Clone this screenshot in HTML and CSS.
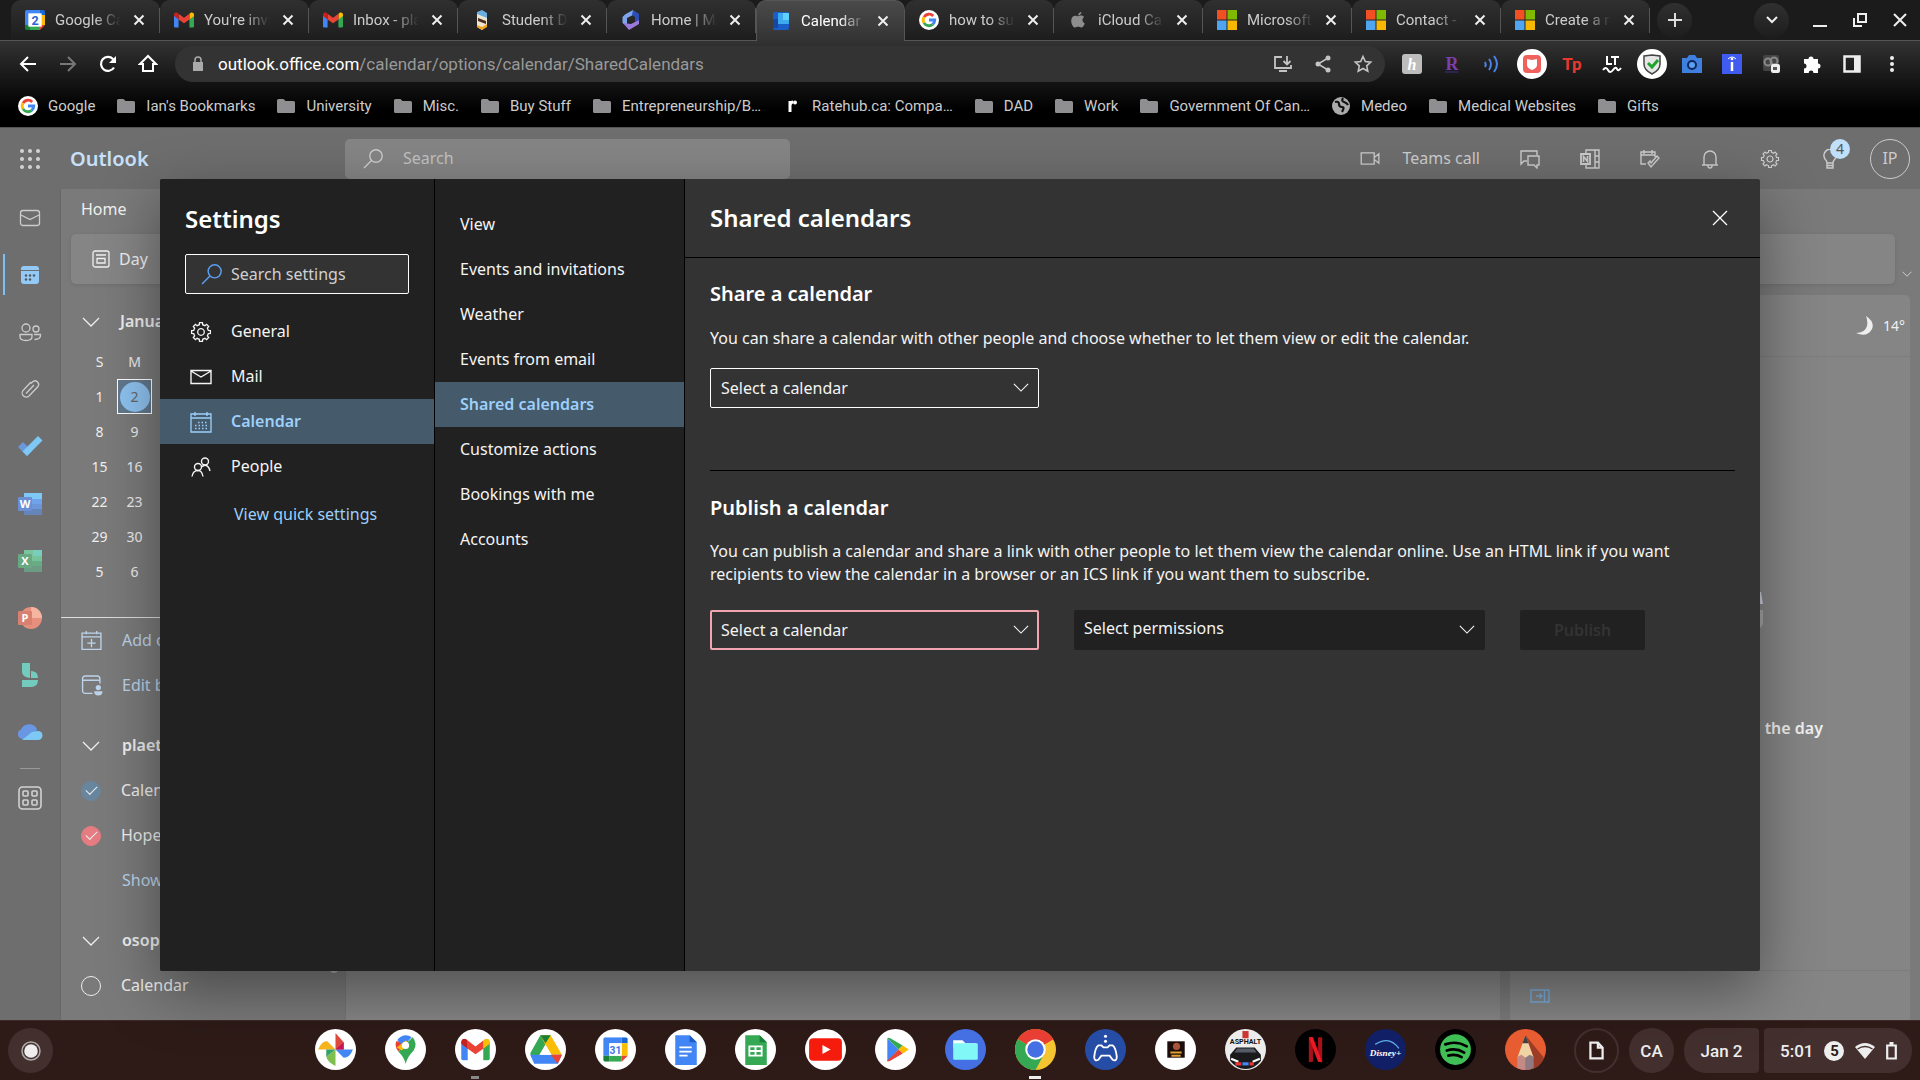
FILE: index.html
```html
<!doctype html>
<html lang="en">

<head>
	<meta charset="utf-8">
	<title>Calendar - Outlook</title>
	<link rel="stylesheet" href="styles.css">
</head>

<body>
	<!-- shared icons -->
	<svg class="defs" width="0" height="0">
		<symbol id="x" viewBox="0 0 12 12"><path d="M1.5 1.5l9 9M10.5 1.5l-9 9" fill="none" stroke="currentColor" stroke-width="2"/></symbol>
		<symbol id="folder" viewBox="0 0 20 20"><path d="M1 4.500a1.500 1.500 0 0 1 1.500-1.500h5l2 2h8a1.500 1.500 0 0 1 1.500 1.500v9a1.500 1.500 0 0 1-1.500 1.500h-15A1.500 1.500 0 0 1 1 15.500z" fill="#8f8f92"/></symbol>
		<symbol id="gmail" viewBox="0 0 24 18"><path d="M0 2v14.500A1.500 1.500 0 0 0 1.500 18H5.500V8z" fill="#4285f4"/><path d="M24 2v14.500a1.500 1.500 0 0 1-1.500 1.500H18.500V8z" fill="#34a853"/><path d="M18.500 1.500V8.300L24 4.200V2.500C24 .3 21.400-.8 19.700.5z" fill="#fbbc04"/><path d="M5.500 8.300V1.500L12 6.400l6.500-4.900v6.800L12 13z" fill="#ea4335"/><path d="M0 2.500v1.700l5.500 4.100V1.500L4.300.5C2.600-.8 0 .3 0 2.500z" fill="#c5221f"/></symbol>
		<symbol id="ms" viewBox="0 0 20 20"><path d="M0 0h9.500v9.500H0z" fill="#f25022"/><path d="M10.500 0H20v9.500h-9.500z" fill="#7fba00"/><path d="M0 10.500h9.500V20H0z" fill="#4fa5ef"/><path d="M10.500 10.500H20V20h-9.500z" fill="#f8b700"/></symbol>
		<symbol id="g" viewBox="0 0 20 20"><circle cx="10" cy="10" r="10" fill="#fff"/><g fill="none" stroke-width="2.800"><path d="M14.200 6A5.800 5.800 0 0 0 5 7.100" stroke="#ea4335"/><path d="M5 7.100a5.800 5.800 0 0 0 0 5.800" stroke="#fbbc05"/><path d="M5 12.900a5.800 5.800 0 0 0 8.700 1.500" stroke="#34a853"/><path d="M13.700 14.400A5.800 5.800 0 0 0 15.800 10H10" stroke="#4285f4"/></g></symbol>
		<symbol id="down" viewBox="0 0 18 10"><path d="M1 1l8 8 8-8" fill="none" stroke="currentColor" stroke-width="1.300"/></symbol>
		<symbol id="gear" viewBox="-11 -11 22 22"><path d="M-1.690-7.310L-1.490-9.380H1.490L1.690-7.310 3.970-6.360 5.580-7.690 7.690-5.580 6.360-3.970 7.310-1.690 9.380-1.490V1.490L7.310 1.690 6.360 3.970 7.690 5.580 5.580 7.690 3.970 6.360 1.690 7.310 1.490 9.380H-1.490L-1.690 7.310-3.970 6.360-5.580 7.690-7.690 5.580-6.360 3.970-7.310 1.690-9.380 1.490V-1.490L-7.310-1.690-6.360-3.970-7.690-5.580-5.580-7.690-3.970-6.360z" fill="none" stroke="currentColor" stroke-width="1.300"/><circle r="3.300" fill="none" stroke="currentColor" stroke-width="1.300"/></symbol>
		<symbol id="find" viewBox="0 0 20 20"><path d="M1 19l7.500-7.500" fill="none" stroke="currentColor" stroke-width="1.400"/><circle cx="13" cy="7" r="6.200" fill="none" stroke="currentColor" stroke-width="1.400"/></symbol>
		<symbol id="gcal" viewBox="0 0 24 24"><path d="M2 0h16v6H6v12H0V2a2 2 0 0 1 2-2z" fill="#4285f4"/><path d="M18 0h4a2 2 0 0 1 2 2v4h-6z" fill="#1967d2"/><path d="M18 6h6v12h-6z" fill="#fbbc04"/><path d="M6 18h12v6H6z" fill="#34a853"/><path d="M0 18h6v6H2a2 2 0 0 1-2-2z" fill="#188038"/><path d="M18 18h6l-6 6z" fill="#ea4335"/><path d="M6 6h12v12H6z" fill="#fff"/></symbol>
	</svg>

	<header class="browser">
		<div class="tabs">
			<div class="tab"><svg class="fav" viewBox="0 0 24 24"><use href="#gcal"/><path d="M4 4h16v16H4z" fill="#fff"/><text x="12" y="18" text-anchor="middle" class="fav-num">2</text></svg><span class="tab-title">Google Cale</span><button class="tab-x" aria-label="Close tab"><svg><use href="#x"/></svg></button></div>
			<div class="tab"><svg class="fav"><use href="#gmail"/></svg><span class="tab-title">You're invit</span><button class="tab-x" aria-label="Close tab"><svg><use href="#x"/></svg></button></div>
			<div class="tab"><svg class="fav"><use href="#gmail"/></svg><span class="tab-title">Inbox - plae</span><button class="tab-x" aria-label="Close tab"><svg><use href="#x"/></svg></button></div>
			<div class="tab"><svg class="fav" viewBox="0 0 20 20"><path d="M5 2l5-2 5 3v5l-5 3-5-3z" fill="#69aee0"/><path d="M5 4l10 4v8l-5 4-5-3z" fill="#efe6d2"/><path d="M6 8l8 3v3l-8-3z" fill="#4a2c20"/><path d="M5 15l5 2 5-3v3l-5 3-5-3z" fill="#f0a51e"/></svg><span class="tab-title">Student Dev</span><button class="tab-x" aria-label="Close tab"><svg><use href="#x"/></svg></button></div>
			<div class="tab"><svg class="fav" viewBox="0 0 20 20"><path d="M12 0L4 4.500 1.500 7v6L6 16V8l6-3z" fill="#7fa5ee"/><path d="M12 0l6 4v6l-4 2V7l-3-2z" fill="#2c4fb5"/><path d="M2 13l6 7 10-6v-4l-8 4z" fill="#9a79dc"/></svg><span class="tab-title">Home | Micr</span><button class="tab-x" aria-label="Close tab"><svg><use href="#x"/></svg></button></div>
			<div class="tab active"><svg class="fav" viewBox="0 0 20 20"><rect x="2" y="1" width="16" height="18" rx="2" fill="#1a5fc8"/><path d="M7 2h11v11H7z" fill="#3fa9f0"/><path d="M12 2h6v7h-6z" fill="#5fd0ff"/><path d="M2 8h5v9H2z" fill="#1748a0"/></svg><span class="tab-title">Calendar - O</span><button class="tab-x" aria-label="Close tab"><svg><use href="#x"/></svg></button></div>
			<div class="tab"><svg class="fav"><use href="#g"/></svg><span class="tab-title">how to subs</span><button class="tab-x" aria-label="Close tab"><svg><use href="#x"/></svg></button></div>
			<div class="tab"><svg class="fav" viewBox="0 0 20 20"><path d="M13.500 2c0 1.800-1.500 3.400-3.300 3.400C10 3.500 11.700 2 13.500 2zM10 6.200c1 0 1.800-.7 3.200-.7 1.200 0 2.300.6 3 1.600-2.600 1.600-2.200 5.200.6 6.300-.8 2-2 4.100-3.600 4.100-1.200 0-1.600-.7-3-.7s-1.900.7-3 .7c-2.200 0-4-3.900-4-6.800 0-3.200 2-5 4-5 1.200 0 2 .5 2.800.5z" fill="#8d8d8d"/></svg><span class="tab-title">iCloud Cale</span><button class="tab-x" aria-label="Close tab"><svg><use href="#x"/></svg></button></div>
			<div class="tab"><svg class="fav"><use href="#ms"/></svg><span class="tab-title">Microsoft A</span><button class="tab-x" aria-label="Close tab"><svg><use href="#x"/></svg></button></div>
			<div class="tab"><svg class="fav"><use href="#ms"/></svg><span class="tab-title">Contact - M</span><button class="tab-x" aria-label="Close tab"><svg><use href="#x"/></svg></button></div>
			<div class="tab"><svg class="fav"><use href="#ms"/></svg><span class="tab-title">Create a ne</span><button class="tab-x" aria-label="Close tab"><svg><use href="#x"/></svg></button></div>
			<button class="round-btn" aria-label="New tab"><svg width="16" height="16" viewBox="0 0 16 16"><path d="M8 1v14M1 8h14" stroke="#ddd" stroke-width="2"/></svg></button>
			<div class="win">
				<button class="round-btn" aria-label="Search tabs"><svg width="12" height="8" viewBox="0 0 12 8"><path d="M1 1l5 5 5-5" fill="none" stroke="#eee" stroke-width="2"/></svg></button>
				<button class="win-btn" aria-label="Minimize"><svg viewBox="0 0 16 16"><path d="M1 14h14" stroke="#eee" stroke-width="2"/></svg></button>
				<button class="win-btn" aria-label="Restore"><svg viewBox="0 0 16 16"><path d="M6 2h8v8H6zM2 6v8h8" fill="none" stroke="#eee" stroke-width="2"/></svg></button>
				<button class="win-btn" aria-label="Close"><svg viewBox="0 0 16 16"><path d="M2 2l12 12M14 2L2 14" stroke="#eee" stroke-width="2"/></svg></button>
			</div>
		</div>

		<div class="toolbar">
			<button class="tool" aria-label="Back"><svg viewBox="0 0 20 20"><path d="M18 10H3M10 3l-7 7 7 7" fill="none" stroke="#fff" stroke-width="2"/></svg></button>
			<button class="tool" aria-label="Forward"><svg viewBox="0 0 20 20"><path d="M2 10h15M10 3l7 7-7 7" fill="none" stroke="#777" stroke-width="2"/></svg></button>
			<button class="tool" aria-label="Reload"><svg viewBox="0 0 20 20"><path d="M16 13.500A7 7 0 1 1 15 5l2 2.500" fill="none" stroke="#fff" stroke-width="2.200"/><path d="M18 2v7h-7z" fill="#fff"/></svg></button>
			<button class="tool" aria-label="Home"><svg viewBox="0 0 20 20"><path d="M2 10l8-8 8 8h-3v7H5v-7z" fill="none" stroke="#fff" stroke-width="2"/></svg></button>
			<div class="omnibox">
				<svg class="lock" viewBox="0 0 12 16"><path d="M1 6h10v9H1z" fill="#aaa"/><path d="M3 7V4a3 3 0 0 1 6 0v3" fill="none" stroke="#aaa" stroke-width="1.500"/></svg>
				<span class="url"><b>outlook.office.com</b>/calendar/options/calendar/SharedCalendars</span>
				<button class="tool" aria-label="Install"><svg viewBox="0 0 20 20"><path d="M9 3H2v11h16v-3M6 17h8M14 2v8M10.500 7l3.500 3.500L17.500 7" fill="none" stroke="#c4c4c4" stroke-width="1.800"/></svg></button>
				<button class="tool" aria-label="Share"><svg viewBox="0 0 20 20"><path d="M15 4L5 10l10 6" fill="none" stroke="#c4c4c4" stroke-width="1.500"/><g fill="#c4c4c4"><circle cx="15" cy="4" r="2.500"/><circle cx="5" cy="10" r="2.500"/><circle cx="15" cy="16" r="2.500"/></g></svg></button>
				<button class="tool" aria-label="Bookmark"><svg viewBox="0 0 20 20"><path d="M10 2.500l2.300 5 5.400.6-4 3.700 1.100 5.400-4.800-2.700-4.800 2.700 1.100-5.400-4-3.700 5.400-.6z" fill="none" stroke="#c4c4c4" stroke-width="1.600"/></svg></button>
			</div>
			<div class="exts">
				<button class="tool" aria-label="Honey"><svg viewBox="0 0 20 20"><rect width="20" height="20" rx="3" fill="#bdbdbd"/><text x="10" y="16" text-anchor="middle" class="ext-h">h</text></svg></button>
				<button class="tool" aria-label="Rakuten"><svg viewBox="0 0 20 20"><text x="10" y="16" text-anchor="middle" class="ext-r">R</text><path d="M3 18h13" stroke="#2c2550" stroke-width="2"/></svg></button>
				<button class="tool" aria-label="Read aloud"><svg viewBox="0 0 20 20"><g fill="none" stroke="#4b83e8" stroke-width="2"><path d="M3 8q1.500 2.500 0 5M7 5q4 5 0 11M12 2q6 8 0 16"/></g></svg></button>
				<button class="tool" aria-label="Ad blocker"><svg class="big" viewBox="0 0 30 30"><circle cx="15" cy="15" r="15" fill="#fff"/><rect x="6" y="6" width="18" height="18" rx="4" fill="#f0605c"/><path d="M10 10l5 1 5-1v6q0 3-5 5-5-2-5-5z" fill="#fff"/></svg></button>
				<button class="tool" aria-label="Teleparty"><svg viewBox="0 0 20 20"><text x="10" y="16" text-anchor="middle" class="ext-tp">Tp</text></svg></button>
				<button class="tool" aria-label="LanguageTool"><svg viewBox="0 0 20 20"><path d="M5 2v8h5M9 3h8M13 3v8" fill="none" stroke="#fff" stroke-width="2"/><path d="M1 16q3-4 5 0t5 0 4-1 4-1" fill="none" stroke="#fff" stroke-width="2"/></svg></button>
				<button class="tool" aria-label="Security"><svg class="big" viewBox="0 0 30 30"><circle cx="15" cy="15" r="15" fill="#fff"/><path d="M7 7l8-1 8 1v8q0 6-8 10-8-4-8-10z" fill="#e6e6e6" stroke="#444" stroke-width="1.500"/><path d="M11 14l4 4 6-7" fill="none" stroke="#1fa32b" stroke-width="3"/></svg></button>
				<button class="tool" aria-label="Screenshot"><svg viewBox="0 0 20 20"><path d="M0 4h5l2-3h6l2 3h5v15H0z" fill="#3f7fe0"/><circle cx="10" cy="11" r="4" fill="#5aa0f5" stroke="#10275c" stroke-width="2"/></svg></button>
				<button class="tool" aria-label="Info"><svg viewBox="0 0 20 20"><path d="M0 0h20v20H0z" fill="#3f5bf0"/><path d="M10 8v9" stroke="#fff" stroke-width="2.500"/><circle cx="10" cy="5" r="1.300" fill="#fff"/><path d="M6 5q4-4 8 0" fill="none" stroke="#fff"/></svg></button>
				<button class="tool" aria-label="Incognito"><svg viewBox="0 0 20 20"><rect x="1" y="1" width="16" height="16" rx="2" fill="#444"/><circle cx="6" cy="8" r="3.500" fill="none" stroke="#888" stroke-width="2"/><circle cx="12" cy="7" r="3.500" fill="none" stroke="#888" stroke-width="2"/><rect x="9" y="10" width="9" height="9" rx="2" fill="#eee"/><path d="M11 13h4v3h-4z" fill="#555"/></svg></button>
				<button class="tool" aria-label="Extensions"><svg viewBox="0 0 20 20"><path d="M2 5h4.500a2.500 2.500 0 1 1 5 0H16v4.500a2.500 2.500 0 1 1 0 5V19h-4.500a2.400 2.400 0 1 0-4.800 0H2v-4.500a2.500 2.500 0 0 0 0-5z" fill="#fff"/></svg></button>
				<button class="tool" aria-label="Side panel"><svg viewBox="0 0 20 20"><path d="M2.500 2.500h15v15h-15z" fill="none" stroke="#eee" stroke-width="2.500"/><path d="M12 2h6v16h-6z" fill="#eee"/></svg></button>
				<button class="tool" aria-label="Menu"><svg viewBox="0 0 20 20"><g fill="#eee"><circle cx="10" cy="4" r="2"/><circle cx="10" cy="10" r="2"/><circle cx="10" cy="16" r="2"/></g></svg></button>
			</div>
		</div>

		<nav class="bookmarks">
			<a href="#"><svg><use href="#g"/></svg>Google</a>
			<a href="#"><svg><use href="#folder"/></svg>Ian's Bookmarks</a>
			<a href="#"><svg><use href="#folder"/></svg>University</a>
			<a href="#"><svg><use href="#folder"/></svg>Misc.</a>
			<a href="#"><svg><use href="#folder"/></svg>Buy Stuff</a>
			<a href="#"><svg><use href="#folder"/></svg>Entrepreneurship/B…</a>
			<a href="#"><svg viewBox="0 0 20 20"><path d="M8 16V5M8 9q1-3 3-3" fill="none" stroke="#fff" stroke-width="3"/><circle cx="13" cy="6.500" r="2" fill="#fff"/></svg>Ratehub.ca: Compa…</a>
			<a href="#"><svg><use href="#folder"/></svg>DAD</a>
			<a href="#"><svg><use href="#folder"/></svg>Work</a>
			<a href="#"><svg><use href="#folder"/></svg>Government Of Can…</a>
			<a href="#"><svg viewBox="0 0 20 20"><circle cx="10" cy="10" r="9" fill="#aaa"/><path d="M4 6q4-1 4 2t3 3 0 5M12 2q-2 3 1 4t4 3" fill="none" stroke="#111" stroke-width="2.200"/></svg>Medeo</a>
			<a href="#"><svg><use href="#folder"/></svg>Medical Websites</a>
			<a href="#"><svg><use href="#folder"/></svg>Gifts</a>
		</nav>
	</header>

	<main class="app">
		<header class="app-bar">
			<button class="waffle" aria-label="App launcher"><svg viewBox="0 0 20 20"><g fill="#d2d2d2"><circle cx="2" cy="2" r="2"/><circle cx="10" cy="2" r="2"/><circle cx="18" cy="2" r="2"/><circle cx="2" cy="10" r="2"/><circle cx="10" cy="10" r="2"/><circle cx="18" cy="10" r="2"/><circle cx="2" cy="18" r="2"/><circle cx="10" cy="18" r="2"/><circle cx="18" cy="18" r="2"/></g></svg></button>
			<a class="brand" href="#">Outlook</a>
			<label class="search"><svg><use href="#find"/></svg><input type="text" placeholder="Search" aria-label="Search"></label>
			<div class="app-tools">
				<button class="teams"><svg viewBox="0 0 22 14"><path d="M1 1h14v12H1zM15 6l5-4v10l-5-4" fill="none" stroke="currentColor" stroke-width="1.400"/></svg>Teams call</button>
				<button class="app-btn" aria-label="Chat"><svg viewBox="0 0 20 20"><path d="M7 12H4l-3 3V2h16v4M8 7h11v9h-2v3l-3-3H8z" fill="none" stroke="currentColor" stroke-width="1.400"/></svg></button>
				<button class="app-btn" aria-label="OneNote"><svg viewBox="0 0 20 20"><path d="M6 5V1h13v18H6v-4M15 1v18M15 7h4M15 13h4" fill="none" stroke="currentColor" stroke-width="1.400"/><path d="M1 5h9v10H1z" fill="none" stroke="currentColor" stroke-width="1.800"/><path d="M3.500 13V7.500l4 5V7" fill="none" stroke="currentColor" stroke-width="1.600"/></svg></button>
				<button class="app-btn" aria-label="To do"><svg viewBox="0 0 20 20"><path d="M6 15H1V3h14v5M1 6h14M4 1v4M12 1v4M8 14l3 4 8-9-2-2-6 7-1-2z" fill="none" stroke="currentColor" stroke-width="1.400"/></svg></button>
				<button class="app-btn" aria-label="Notifications"><svg viewBox="0 0 20 20"><path d="M2 16h16M4 16V8a6 6 0 0 1 12 0v8M8 16v1a2 2 0 0 0 4 0v-1" fill="none" stroke="currentColor" stroke-width="1.400"/></svg></button>
				<button class="app-btn" aria-label="Settings"><svg><use href="#gear"/></svg></button>
				<button class="app-btn" aria-label="Tips"><svg viewBox="0 0 20 20"><path d="M7 14q0-2-2-4a6.500 6.500 0 0 1 5-10 6.500 6.500 0 0 1 5 10q-2 2-2 4zM7 14v5h6v-5M7 16.500h6" fill="none" stroke="currentColor" stroke-width="1.400"/></svg><span class="badge">4</span></button>
				<button class="avatar">IP</button>
			</div>
		</header>

		<div class="app-body">
			<div class="rail">
				<nav class="rail-list">
					<a href="#" aria-label="Mail"><svg viewBox="0 0 24 24"><rect x="2.500" y="4.500" width="19" height="15" rx="2.500" fill="none" stroke="currentColor" stroke-width="1.300"/><path d="M3 9l9 4.500L21 9" fill="none" stroke="currentColor" stroke-width="1.300"/></svg></a>
					<a href="#" class="on" aria-label="Calendar"><svg viewBox="0 0 24 24"><path d="M3 7V6a3 3 0 0 1 3-3h12a3 3 0 0 1 3 3v1zM3 8h18v10a3 3 0 0 1-3 3H6a3 3 0 0 1-3-3z" fill="#92c9f7"/><g fill="#555"><circle cx="8" cy="12.500" r="1.200"/><circle cx="12" cy="12.500" r="1.200"/><circle cx="16" cy="12.500" r="1.200"/><circle cx="8" cy="16.500" r="1.200"/><circle cx="12" cy="16.500" r="1.200"/></g></svg></a>
					<a href="#" aria-label="People"><svg viewBox="0 0 24 24"><g fill="none" stroke="currentColor" stroke-width="1.300"><circle cx="8" cy="8" r="4"/><circle cx="18" cy="9" r="3"/><path d="M2 14.500h12v2q0 4-6 4t-6-4zM16 14.500h6.500q.5 5-6 5"/></g></svg></a>
					<a href="#" aria-label="Files"><svg viewBox="0 0 24 24"><path d="M13 5L5.500 13a3.900 3.900 0 0 0 5.500 6l9-9.500a3.600 3.600 0 0 0-5-5L13 6.500M8 16.500l8-8.500" fill="none" stroke="currentColor" stroke-width="1.300"/></svg></a>
					<a href="#" aria-label="To Do"><svg viewBox="0 0 24 24"><path d="M0 13l5-5 9 9-5 5z" fill="#6c97da"/><path d="M9 22l-4.500-4.500L20 2l4.500 4.500z" fill="#7dc8f5"/></svg></a>
					<a href="#" aria-label="Word"><svg viewBox="0 0 24 24"><path d="M6 1h18v6H6z" fill="#7dc8f5"/><path d="M6 7h18v5H6z" fill="#6ea3ec"/><path d="M6 12h18v5H6z" fill="#6b96d9"/><path d="M6 17h18v6H6z" fill="#6484ba"/><rect y="5" width="14" height="14" rx="1" fill="#6a8fd4"/><text x="7" y="16" text-anchor="middle" class="office">W</text></svg></a>
					<a href="#" aria-label="Excel"><svg viewBox="0 0 24 24"><path d="M6 1h18v6H6z" fill="#78cdbc"/><path d="M6 1h9v11H6z" fill="#7ac49b"/><path d="M6 12h18v5H6z" fill="#69ab82"/><path d="M15 7h9v5h-9z" fill="#75c39b"/><path d="M6 17h18v6H6z" fill="#6c9c84"/><rect y="5" width="14" height="14" rx="1" fill="#68a982"/><text x="7" y="16" text-anchor="middle" class="office">X</text></svg></a>
					<a href="#" aria-label="PowerPoint"><svg viewBox="0 0 24 24"><circle cx="13" cy="12" r="11" fill="#e58f7c"/><path d="M13 1a11 11 0 0 1 11 11H13z" fill="#f6b5a1"/><rect y="5" width="14" height="14" rx="1" fill="#d98170"/><text x="7" y="16" text-anchor="middle" class="office">P</text></svg></a>
					<a href="#" aria-label="Bookings"><svg viewBox="0 0 24 24"><path d="M4 0h8v15q-8-1-8-6zM13 8q7 0 7 7h-7zM4 17h16q0 7-7 7H4z" fill="#73cbbd"/></svg></a>
					<a href="#" aria-label="OneDrive"><svg viewBox="0 0 24 24"><path d="M4 19a5 5 0 0 1-1-9.500A9 9 0 0 1 19 9l-3 10z" fill="#6a97e4"/><path d="M4 20l10-8 6-1a4.500 4.500 0 0 1 0 9z" fill="#7dc8f5"/></svg></a>
				</nav>
				<div class="rail-line"></div>
				<button class="more" aria-label="More apps"><svg viewBox="0 0 24 24"><g fill="none" stroke="currentColor" stroke-width="1.600"><rect x="1" y="1" width="22" height="22" rx="3.500"/><rect x="5" y="5" width="5" height="5" rx="1"/><rect x="14" y="5" width="5" height="5" rx="1"/><rect x="5" y="14" width="5" height="5" rx="1"/><rect x="14" y="14" width="5" height="5" rx="1"/></g></svg></button>
			</div>

			<div class="page">
				<a class="home-tab" href="#">Home</a>
				<div class="ribbon-row">
					<div class="ribbon">
						<button class="day"><svg viewBox="0 0 18 18"><g fill="none" stroke="currentColor" stroke-width="1.300"><rect x="1" y="1" width="16" height="16" rx="2"/><path d="M4 5h10M5 8.500h8v4.500H5z"/></g></svg>Day</button>
					</div>
					<svg class="ribbon-more"><use href="#down"/></svg>
				</div>
				<div class="columns">
					<aside class="side">
						<button class="side-row month"><svg class="chev"><use href="#down"/></svg><b>Janua</b></button>
						<table class="days">
							<tr><th>S</th><th>M</th></tr>
							<tr><td>1</td><td class="today"><span>2</span></td></tr>
							<tr><td>8</td><td>9</td></tr>
							<tr><td>15</td><td>16</td></tr>
							<tr><td>22</td><td>23</td></tr>
							<tr><td>29</td><td>30</td></tr>
							<tr><td>5</td><td>6</td></tr>
						</table>
						<div class="lists">
							<a class="side-row" href="#"><svg class="side-icon" viewBox="0 0 20 20"><path d="M1 3h18v15.500H1zM1 6.500h18M5 1v3M15 1v3M10 8.500v8M6 12.500h8" fill="none" stroke="currentColor" stroke-width="1.300"/></svg>Add c</a>
							<a class="side-row" href="#"><svg class="side-icon" viewBox="0 0 20 20"><path d="M11 17.500H4a2.500 2.500 0 0 1-2.500-2.500V3.500A2.500 2.500 0 0 1 4 1h11.500A2.500 2.500 0 0 1 18 3.500V8M1.500 5H18" fill="none" stroke="currentColor" stroke-width="1.300"/><circle cx="16.500" cy="12" r="2.500" fill="currentColor"/><path d="M12.500 15.500h8q0 4-4 4t-4-4z" fill="currentColor"/></svg>Edit b</a>
							<button class="side-row group"><svg class="chev"><use href="#down"/></svg><b>plaet</b></button>
							<label class="side-row"><input type="checkbox" class="tick blue" checked>Calen</label>
							<label class="side-row"><input type="checkbox" class="tick red" checked>Hope</label>
							<a class="side-row plain" href="#">Show</a>
							<button class="side-row group"><svg class="chev"><use href="#down"/></svg><b>osop</b></button>
							<label class="side-row"><input type="checkbox" class="tick">Calendar</label>
						</div>
					</aside>
					<section class="surface"></section>
					<section class="agenda">
						<div class="weather"><svg viewBox="0 0 20 20"><path d="M11 0q9 6 6 13-5 9-16 4 9 0 11-7 1-5-1-10z" fill="#eee"/></svg>14°</div>
						<div class="agenda-body">
							<svg viewBox="0 0 106 38"><path d="M20 0h84l2 12H0z" fill="#c9cdd6"/><path d="M0 18h106v14l-4 6H4l-4-6z" fill="#a4a4a4"/></svg>
							<p>the day</p>
						</div>
						<div class="agenda-foot"><svg viewBox="0 0 20 14"><path d="M1 1h18v12H1zM14.500 1v12M6 7h6M9.500 4.500L12 7 9.500 9.500" fill="none" stroke="#79aedd" stroke-width="1.400"/></svg></div>
					</section>
				</div>
			</div>
		</div>

		<!-- settings window over the calendar -->
		<div class="dialog" role="dialog" aria-label="Settings">
			<div class="cats">
				<h1>Settings</h1>
				<label class="find"><svg><use href="#find"/></svg><input type="text" placeholder="Search settings" aria-label="Search settings"></label>
				<nav>
					<a href="#"><svg><use href="#gear"/></svg>General</a>
					<a href="#"><svg viewBox="0 0 22 22"><path d="M1 4.500h20v13H1zM1 5l10 6 10-6" fill="none" stroke="currentColor" stroke-width="1.400"/></svg>Mail</a>
					<a href="#" class="on"><svg viewBox="0 0 22 22"><path d="M1 3h20v18H1zM1 7h20M5 1v4M17 1v4" fill="none" stroke="currentColor" stroke-width="1.300"/><path d="M5 17.500h12M5 14.500h12M8 11.500h10" fill="none" stroke="currentColor" stroke-width="1.500" stroke-dasharray="1.500 2"/></svg>Calendar</a>
					<a href="#"><svg viewBox="0 0 22 22"><g fill="none" stroke="currentColor" stroke-width="1.400"><circle cx="15" cy="5.500" r="3.500"/><path d="M12 10.500l3-1.500q4 1 5 6"/><circle cx="8" cy="11" r="3.500"/><path d="M2 20.500q1-6 6-6 4 0 5 6"/></g></svg>People</a>
				</nav>
				<a class="quick" href="#">View quick settings</a>
			</div>
			<nav class="subs">
				<a href="#">View</a>
				<a href="#">Events and invitations</a>
				<a href="#">Weather</a>
				<a href="#">Events from email</a>
				<a href="#" class="on">Shared calendars</a>
				<a href="#">Customize actions</a>
				<a href="#">Bookings with me</a>
				<a href="#">Accounts</a>
			</nav>
			<div class="panel">
				<div class="panel-head">
					<h1>Shared calendars</h1>
					<button aria-label="Close"><svg viewBox="0 0 16 16"><path d="M1 1l14 14M15 1L1 15" stroke="#fff" stroke-width="1.300"/></svg></button>
				</div>
				<div class="panel-body">
					<section class="share">
						<h2>Share a calendar</h2>
						<p>You can share a calendar with other people and choose whether to let them view or edit the calendar.</p>
						<div class="pick line"><select aria-label="Calendar to share"><option>Select a calendar</option></select><svg><use href="#down"/></svg></div>
					</section>
					<section class="publish">
						<h2>Publish a calendar</h2>
						<p>You can publish a calendar and share a link with other people to let them view the calendar online. Use an HTML link if you want recipients to view the calendar in a browser or an ICS link if you want them to subscribe.</p>
						<div class="row">
							<div class="pick error"><select aria-label="Calendar to publish"><option>Select a calendar</option></select><svg><use href="#down"/></svg></div>
							<div class="pick fill"><select aria-label="Permissions"><option>Select permissions</option></select><svg><use href="#down"/></svg></div>
							<button class="go" disabled>Publish</button>
						</div>
					</section>
				</div>
			</div>
		</div>
	</main>

	<footer class="shelf">
		<button class="launcher" aria-label="Launcher"><svg viewBox="0 0 20 20"><circle cx="10" cy="10" r="9" fill="none" stroke="#aaa" stroke-width="1.500"/><circle cx="10" cy="10" r="6.800" fill="#eee"/></svg></button>
		<nav class="apps">
			<a href="#" aria-label="Photos"><svg viewBox="0 0 40 40"><circle cx="20" cy="20" r="20" fill="#fff"/><path d="M20 4l8 9v7h-8z" fill="#e0483e"/><path d="M20 20h17q-3 8-9 8z" fill="#4285f4"/><path d="M20 20v16q-8-4-9-9z" fill="#7fbf4d"/><path d="M20 20H3q4-9 9-8z" fill="#f6b31c"/><path d="M20 20h8v-7z" fill="#c2185b"/><path d="M20 20l-9 7v-7z" fill="#34a06a"/></svg></a>
			<a href="#" aria-label="Maps"><svg viewBox="0 0 40 40"><circle cx="20" cy="20" r="20" fill="#fff"/><path d="M11 12q-2 5 2 10l8-9z" fill="#ea4335"/><path d="M12 11a9.500 9.500 0 0 1 14-3l-8 9z" fill="#4285f4"/><path d="M13 22l14-14q5 6 1 13-6 6-8 13-1-6-7-12z" fill="#34a853"/><path d="M11.500 18l5 3 6-7-2-3z" fill="#fbbc04"/><circle cx="20" cy="16" r="3.500" fill="#fff"/></svg></a>
			<a href="#" class="run" aria-label="Gmail"><svg viewBox="0 0 40 40"><circle cx="20" cy="20" r="20" fill="#fff"/><use href="#gmail" x="6" y="9" width="28" height="22"/></svg></a>
			<a href="#" aria-label="Drive"><svg viewBox="0 0 40 40"><circle cx="20" cy="20" r="20" fill="#fff"/><path d="M15 6h10l-5 9-9 18-6-9z" fill="#34a853"/><path d="M15 6h10l11 19H25z" fill="#fbbc04"/><path d="M15 6h10l-5 8z" fill="#188038"/><path d="M5 25h31l-4 9H9z" fill="#4285f4"/><path d="M25 25h11l-4 9z" fill="#ea4335"/><path d="M20 15l6 10H14z" fill="#fff"/></svg></a>
			<a href="#" aria-label="Calendar"><svg viewBox="0 0 40 40"><circle cx="20" cy="20" r="20" fill="#fff"/><use href="#gcal" x="8" y="8" width="24" height="24"/><text x="20" y="24" text-anchor="middle" class="cal31">31</text></svg></a>
			<a href="#" aria-label="Docs"><svg viewBox="0 0 40 40"><circle cx="20" cy="20" r="20" fill="#fff"/><path d="M10 6h14l7 7v22H10z" fill="#4285f4"/><path d="M24 6l7 7h-7z" fill="#1b5cc8"/><path d="M14 18h12M14 22h12M14 26h8" stroke="#fff" stroke-width="1.800"/></svg></a>
			<a href="#" aria-label="Sheets"><svg viewBox="0 0 40 40"><circle cx="20" cy="20" r="20" fill="#fff"/><path d="M10 6h14l7 7v22H10z" fill="#34a853"/><path d="M24 6l7 7h-7z" fill="#188038"/><path d="M14 17h12v9H14zM14 21.500h12M20 17v9" fill="none" stroke="#fff" stroke-width="1.800"/></svg></a>
			<a href="#" aria-label="YouTube"><svg viewBox="0 0 40 40"><circle cx="20" cy="20" r="20" fill="#fff"/><rect x="4" y="9" width="32" height="22" rx="4" fill="#f61c0d"/><path d="M17 15.500l8 4.500-8 4.500z" fill="#fff"/></svg></a>
			<a href="#" aria-label="Play Store"><svg viewBox="0 0 40 40"><circle cx="20" cy="20" r="20" fill="#fff"/><path d="M12 9v23l11-12z" fill="#4285f4"/><path d="M12 9q1-1 3 0l12 7-4 4z" fill="#34a853"/><path d="M27 16l6 4-6 4-4-4z" fill="#fbbc04"/><path d="M12 31q1 1 3 0l12-7-4-4z" fill="#ea4335"/></svg></a>
			<a href="#" aria-label="Files"><svg viewBox="0 0 40 40"><circle cx="20" cy="20" r="20" fill="#4470e4"/><path d="M8 11h9l3 3h10v4H8z" fill="#f4ffff"/><rect x="8" y="14" width="24" height="16" rx="1" fill="#82f7f7"/></svg></a>
			<a href="#" class="run now" aria-label="Chrome"><svg viewBox="0 0 40 40"><circle cx="20" cy="20" r="20" fill="#f4c431"/><path d="M20 20L2.700 10A20 20 0 0 1 37.300 10z" fill="#e83e33"/><path d="M20 20L2.700 10A20 20 0 0 0 20 40l8-15z" fill="#34a853"/><path d="M20 10h17.300L20 20z" fill="#e83e33"/><circle cx="20" cy="20" r="10" fill="#fff"/><circle cx="20" cy="20" r="8" fill="#4470e4"/></svg></a>
			<a href="#" aria-label="Remote play"><svg viewBox="0 0 40 40"><circle cx="20" cy="20" r="20" fill="#264da6"/><path d="M9 27q1-9 4-11h3l2 2h4l2-2h3q3 2 4 11 0 5-4 3l-3-4h-8l-3 4q-4 2-4-3z" fill="none" stroke="#fff" stroke-width="1.800"/><circle cx="20" cy="7" r="1.500" fill="#fff"/><circle cx="20" cy="12" r="1.500" fill="#fff"/></svg></a>
			<a href="#" aria-label="Star Wars"><svg viewBox="0 0 40 40"><circle cx="20" cy="20" r="20" fill="#fff"/><path d="M12 12h17v16H12z" fill="#1c0d0a"/><circle cx="21" cy="17" r="3.500" fill="#a8543a"/><path d="M15 23h11M16 26h9" stroke="#e0a030" stroke-width="2"/></svg></a>
			<a href="#" aria-label="Asphalt"><svg viewBox="0 0 40 40"><circle cx="20" cy="20" r="20" fill="#ececec"/><path d="M17 2h6v7h-6z" fill="#c33"/><text x="20" y="15" text-anchor="middle" class="asphalt">ASPHALT</text><path d="M5 25l6-7h18l6 7v6q-6 8-15 8T5 31z" fill="#1a1a1c"/><path d="M12 19h16l3 4H9z" fill="#555b66"/><path d="M6 29l7 3M34 29l-7 3" stroke="#fff" stroke-width="2"/><path d="M10 34h6M24 34h4" stroke="#e33" stroke-width="3"/><path d="M17 34h6" stroke="#48f" stroke-width="3"/></svg></a>
			<a href="#" aria-label="Netflix"><svg viewBox="0 0 40 40"><circle cx="20" cy="20" r="20" fill="#000"/><path d="M13.500 8h4v24l-4 .5zM22.500 8h4v24.500l-4-.5z" fill="#a8101a"/><path d="M13.500 8h4l9 24.500-4-.5z" fill="#ec1a23"/></svg></a>
			<a href="#" aria-label="Disney+"><svg viewBox="0 0 40 40"><circle cx="20" cy="20" r="20" fill="#111f66"/><path d="M10 15q14-9 23 4" fill="none" stroke="#5fb0ee" stroke-width="1.200"/><text x="20" y="26" text-anchor="middle" class="disney">Disney+</text></svg></a>
			<a href="#" aria-label="Spotify"><svg viewBox="0 0 40 40"><circle cx="20" cy="20" r="20" fill="#000"/><circle cx="20" cy="20" r="15" fill="#3fbf55"/><path d="M10 15q11-4 21 2M11.500 21q9-3 17 2M13 26q7-2 13 1.500" fill="none" stroke="#000" stroke-width="2.600" stroke-linecap="round"/></svg></a>
			<a href="#" aria-label="Sketchbook"><svg viewBox="0 0 40 40"><circle cx="20" cy="20" r="20" fill="#e85c32"/><path d="M20 6l18 22q-4 10-12 11z" fill="#9c3c26"/><path d="M20 6l8 22H12z" fill="#f0d4a4"/><path d="M20 6l3 8h-6z" fill="#3c4043"/><path d="M12 27l4-2 4 3v12q-4 0-8-2z" fill="#c48a86"/><path d="M20 28l4-3 4 2v11q-4 2-8 2z" fill="#8e7a80"/></svg></a>
		</nav>
		<div class="status">
			<button class="dot ring" aria-label="Tote"><svg viewBox="0 0 16 20"><path d="M1.500 1.500h8L14.500 7v11.500h-13zM9.500 1.500V7h5" fill="none" stroke="#eee" stroke-width="2.400"/></svg></button>
			<button class="dot">CA</button>
			<button class="date">Jan 2</button>
			<button class="tray">5:01<span class="count">5</span><svg width="20" height="16" viewBox="0 0 20 16"><path d="M0 4q10-8 20 0L10 16z" fill="#eee"/><path d="M2.500 6q7.500-5 15 0" fill="none" stroke="#43302e" stroke-width="1.500"/></svg><svg width="11" height="18" viewBox="0 0 11 18"><path d="M1.200 3.500h8.600v13H1.200z" fill="none" stroke="#eee" stroke-width="2.200"/><path d="M3.500 0h4v3h-4z" fill="#eee"/></svg></button>
		</div>
	</footer>
</body>

</html>
```

FILE: styles.css
```css
* { box-sizing: border-box; margin: 0; padding: 0; }

body {
	display: flex;
	flex-direction: column;
	height: 100vh;
	overflow: hidden;
	background: #7a7a7a;
	color: #f0f0f0;
	font: 16px/23px "Noto Sans", "Open Sans", sans-serif;
}
button, input, select { font: inherit; color: inherit; background: none; border: 0; }
a { color: inherit; text-decoration: none; }
svg { display: block; flex: none; }
.defs { position: absolute; }

/* browser */
.browser {
	flex: none;
	height: 128px;
	background: linear-gradient(#333 40px, #000 110px);
	border-bottom: 1px solid #555;
	font: 15px/20px Roboto, sans-serif;
	color: #ccc;
}
.tabs {
	display: flex;
	align-items: center;
	height: 41px;
	padding: 0 0 0 11px;
	background: #1b1b1b;
	border-bottom: 1px solid #555;
}
.tab {
	display: flex;
	flex: 0 1 149px;
	align-items: center;
	min-width: 0;
	height: 40px;
	padding: 0 11px 0 14px;
	border-radius: 10px 10px 0 0;
	background: linear-gradient(#303030, #1d1d1d);
	position: relative;
}
.tab:not(.active)::after {
	content: "";
	position: absolute;
	right: 0;
	top: 8px;
	width: 1px;
	height: 25px;
	background: #555;
}
.tab.active {
	height: 41px;
	margin-bottom: -1px;
	background: linear-gradient(#4a4a4a, #333);
	border: 1px solid #555;
	border-bottom: 0;
	color: #fff;
}
.fav { width: 20px; height: 20px; }
.fav-num { font: bold 15px Roboto, sans-serif; fill: #2a65d0; }
.tab-title {
	flex: 1;
	min-width: 0;
	margin: 0 8px 0 10px;
	overflow: hidden;
	white-space: nowrap;
	-webkit-mask-image: linear-gradient(90deg, #000 60%, transparent);
	mask-image: linear-gradient(90deg, #000 60%, transparent);
}
.tab-x { padding: 4px; color: #eee; }
.tab-x svg { width: 12px; height: 12px; }
.round-btn {
	display: grid;
	flex: none;
	place-items: center;
	width: 35px;
	height: 35px;
	margin-left: 7px;
	border-radius: 50%;
	background: linear-gradient(#303030, #1d1d1d);
}
.win { display: flex; flex: none; margin-left: auto; }
.win .round-btn { margin-right: 11px; }
.win-btn { display: grid; place-items: center; width: 40px; }
.win-btn svg { width: 16px; height: 16px; }

.toolbar { display: flex; align-items: center; height: 46px; padding: 0 8px; }
.tool { display: grid; flex: none; place-items: center; width: 40px; height: 36px; }
.tool svg { width: 20px; height: 20px; }
.tool .big { width: 30px; height: 30px; }
.omnibox {
	display: flex;
	flex: 1;
	align-items: center;
	height: 36px;
	margin: 0 7px;
	padding: 0 2px 0 17px;
	border-radius: 18px;
	background: #333;
}
.lock { width: 12px; height: 16px; }
.url { flex: 1; margin-left: 14px; font-size: 17px; color: #999; }
.url b { font-weight: 400; color: #fff; }
.exts { display: flex; }
.ext-h { font: italic bold 16px "Liberation Serif", serif; fill: #fff; }
.ext-r { font: bold 18px "Liberation Serif", serif; fill: #7b3fb0; }
.ext-tp { font: bold 17px Roboto, sans-serif; fill: #e8392f; }

.bookmarks { display: flex; gap: 21px; height: 38px; padding-left: 18px; align-items: center; }
.bookmarks a { display: flex; gap: 10px; align-items: center; white-space: nowrap; }
.bookmarks svg { width: 20px; height: 20px; }

/* outlook */
.app { position: relative; display: flex; flex: 1; flex-direction: column; min-height: 0; }
.app-bar { display: flex; flex: none; align-items: center; height: 61px; background: #6e6e6e; color: #ccc; }
.waffle { width: 60px; padding-left: 20px; }
.waffle svg { width: 20px; height: 20px; }
.brand { width: 285px; padding-left: 10px; font-size: 20px; font-weight: 600; color: #c7e0f8; }
.search {
	display: flex;
	align-items: center;
	gap: 20px;
	width: 445px;
	height: 40px;
	padding: 0 18px;
	border-radius: 5px;
	background: #858585;
}
.search svg { width: 20px; height: 20px; }
input::placeholder { color: #c2c2c2; opacity: 1; }
.app-tools { display: flex; align-items: center; margin-left: auto; padding-right: 10px; }
.teams { display: flex; align-items: center; gap: 22px; padding-right: 20px; }
.teams svg { width: 21px; height: 13px; }
.app-btn { position: relative; display: grid; place-items: center; width: 60px; height: 60px; }
.app-btn svg { width: 20px; height: 20px; }
.badge {
	position: absolute;
	top: 10px;
	right: 10px;
	width: 20px;
	border-radius: 50%;
	background: #bfdffa;
	color: #555;
	font-size: 14px;
	line-height: 20px;
}
.avatar { width: 40px; height: 40px; margin-left: 10px; border: 1px solid #ccc; border-radius: 50%; }

.app-body { display: flex; flex: 1; min-height: 0; }
.rail { width: 61px; background: #6e6e6e; color: #ccc; border-right: 1px solid #666; }
.rail-list { display: grid; grid-auto-rows: 1fr; height: 572px; }
.rail-list a { display: grid; place-items: center; }
.rail-list .on { box-shadow: inset 2px 0 #7cc1f5; margin: 8px 0 8px 3px; padding-right: 3px; }
.rail svg { width: 24px; height: 24px; overflow: visible; }
.office { font: bold 11px "Open Sans", sans-serif; fill: #fff; }
.rail-line { width: 20px; height: 1px; margin: 7px 20px 17px; background: #999; }
.more { display: block; margin: 0 auto; color: #d2d2d2; }

.page { display: flex; flex: 1; flex-direction: column; min-width: 0; background: #7a7a7a; }
.home-tab { flex: none; height: 45px; padding: 0 20px; line-height: 40px; }
.ribbon-row { display: flex; flex: none; padding: 0 5px 0 10px; }
.ribbon { flex: 1; height: 50px; border-radius: 5px; background: #858585; box-shadow: 0 1px 4px rgba(0, 0, 0, .1); }
.day { display: flex; align-items: center; gap: 9px; height: 50px; padding-left: 21px; }
.day svg { width: 18px; height: 18px; }
.ribbon-more { width: 10px; height: 6px; margin: 37px 3px 0 7px; }
.columns { display: flex; flex: 1; min-height: 0; padding-right: 10px; }
.side { position: relative; width: 284px; padding-top: 15px; color: #eee; }
/* scrollbar thumb of the calendar list */
.side::after {
	content: "";
	position: absolute;
	right: 7px;
	bottom: 47px;
	width: 8px;
	height: 400px;
	border-radius: 4px;
	background: #a8a8a8;
}
.side-row {
	display: flex;
	align-items: center;
	gap: 20px;
	height: 45px;
	padding-left: 20px;
	white-space: nowrap;
}
.side-row b { font-weight: 600; }
a.side-row { color: #bcd3ea; }
.side-icon { width: 21px; height: 21px; overflow: visible; }
.side-row.plain { padding-left: 61px; }
.chev { width: 18px; height: 10px; margin: 0 2px 0 1px; }
.month { gap: 18px; }
.days { margin-left: 21px; border-collapse: collapse; font-size: 14px; text-align: center; }
.days th, .days td { width: 35px; height: 35px; font-weight: 400; }
.days .today { outline: 1px solid #fff; outline-offset: -1px; background: #62788c; }
.today span { display: block; width: 30px; margin: auto; border-radius: 50%; background: #8ec2f0; color: #666; line-height: 30px; }
.lists { margin-top: 28px; border-top: 1px solid #ddd; }
.group { margin-top: 15px; }
.tick {
	appearance: none;
	width: 20px;
	height: 20px;
	border: 1px solid #eee;
	border-radius: 50%;
	display: grid;
	place-items: center;
}
.tick:checked::before {
	content: "";
	width: 10px;
	height: 5px;
	margin-bottom: 3px;
	border: solid #eee;
	border-width: 0 0 1px 1px;
	transform: rotate(-45deg);
}
.tick.blue { background: #69869f; border-color: #69869f; }
.tick.red { background: #e47c82; border-color: #e47c82; }
.surface { flex: 1; margin-top: 11px; background: #858585; border-left: 1px solid #757575; }
.agenda {
	display: flex;
	flex-direction: column;
	width: 400px;
	margin: 11px 0 0 10px;
	border-radius: 5px 5px 0 0;
	background: #858585;
}
.weather {
	display: flex;
	align-items: center;
	justify-content: flex-end;
	gap: 8px;
	height: 62px;
	padding-right: 5px;
	border-bottom: 1px solid #7d7d7d;
	font-size: 14px;
}
.weather svg { width: 20px; height: 20px; }
.agenda-body { flex: 1; padding: 235px 87px 0 0; text-align: right; font-weight: 600; }
.agenda-body svg { width: 106px; height: 38px; margin: 0 60px 87px auto; }
.agenda-foot { height: 50px; padding: 18px 20px; border-top: 1px solid #7d7d7d; }
.agenda-foot svg { width: 20px; height: 14px; }

/* settings dialog */
.dialog {
	position: absolute;
	inset: 51px 160px 49px;
	display: flex;
	border-radius: 2px;
	overflow: hidden;
	background: #333;
	color: #f4f4f4;
	box-shadow: 0 20px 60px rgba(0, 0, 0, .4);
}
h1 { font-size: 24px; line-height: 32px; font-weight: 600; color: #fff; }
h2 { font-size: 20px; line-height: 24px; font-weight: 600; color: #fff; }
.cats { width: 275px; padding-top: 24px; background: #212121; border-right: 1px solid #000; }
.cats h1 { padding-left: 25px; }
.find {
	display: flex;
	align-items: center;
	gap: 9px;
	height: 40px;
	margin: 19px 25px 15px;
	padding-left: 15px;
	border: 1px solid #fff;
	border-radius: 2px;
	background: #333;
}
.find svg { width: 21px; height: 21px; color: #5c9df0; }
.find input { min-width: 0; }
.find input::placeholder { color: #d0d0d0; }
.cats nav a { display: flex; align-items: center; gap: 19px; height: 45px; padding-left: 30px; }
.cats nav svg { width: 22px; height: 22px; }
.dialog nav .on { background: #455a6a; color: #9cd0fb; font-weight: 600; }
.quick { display: block; padding: 14px 0 0 74px; color: #9cd0fb; }
.subs { width: 250px; padding-top: 23px; background: #212121; border-right: 1px solid #000; }
.subs a { display: block; padding-left: 25px; line-height: 45px; }
.panel { flex: 1; }
.panel-head {
	display: flex;
	justify-content: space-between;
	align-items: center;
	height: 79px;
	padding: 0 32px 0 25px;
	border-bottom: 1px solid #000;
}
.panel-head svg { width: 16px; height: 16px; }
.panel-body { padding: 24px 25px; }
.share { height: 189px; border-bottom: 1px solid #000; }
.share p { margin: 21px 0 18px; }
.publish { padding-top: 25px; }
.publish p { margin: 20px 0 24px; }
.row { display: flex; gap: 35px; }
.pick { position: relative; width: 329px; height: 40px; border-radius: 2px; }
.pick select { appearance: none; width: 100%; height: 100%; padding: 0 10px; border-radius: 2px; }
.pick svg { position: absolute; right: 10px; top: 15px; width: 16px; height: 9px; pointer-events: none; }
.line select { border: 1px solid #fff; }
.error select { border: 2px solid #f1a5b0; padding: 0 9px; }
.pick.fill { width: 411px; background: #212121; }
.fill select { padding-bottom: 3px; }
.go { width: 125px; border-radius: 2px; background: #212121; color: #333; font-weight: 600; }

/* shelf */
.shelf {
	display: flex;
	flex: none;
	align-items: center;
	height: 60px;
	padding: 0 8px;
	background: #2e1b18;
	border-top: 1px solid #3c2a28;
	font: 17px/20px Roboto, sans-serif;
	color: #eee;
}
.launcher { display: grid; place-items: center; width: 45px; height: 45px; border-radius: 50%; background: #43302e; }
.launcher svg { width: 20px; height: 20px; }
.apps { display: flex; margin-left: auto; }
.apps a { position: relative; display: grid; place-items: center; width: 70px; height: 57px; padding-bottom: 2px; }
.apps svg { width: 41px; height: 41px; }
.run::after { content: ""; position: absolute; bottom: 0; width: 8px; height: 3px; background: #888; }
.run.now::after { width: 12px; background: #eee; }
.cal31 { font: bold 10px Roboto, sans-serif; fill: #3b76e8; }
.asphalt { font: bold 7px Roboto, sans-serif; fill: #111; }
.disney { font: italic bold 9px "Liberation Serif", serif; fill: #fff; }
.status { display: flex; margin-left: 14px; font-weight: 500; }
.status button { height: 45px; background: #43302e; }
.dot { display: grid; place-items: center; width: 45px; margin-right: 10px; border-radius: 50%; }
.status .ring { background: none; border: 2px solid #43302e; }
.dot svg { width: 15px; height: 19px; }
.status .date { width: 75px; margin-right: 5px; border-radius: 22px 4px 4px 22px; }
.tray { display: flex; align-items: center; gap: 11px; width: 148px; padding-left: 16px; border-radius: 4px 22px 22px 4px; }
.count { width: 20px; border-radius: 50%; background: #eee; color: #2e1b18; font-size: 15px; font-weight: 700; }
```
